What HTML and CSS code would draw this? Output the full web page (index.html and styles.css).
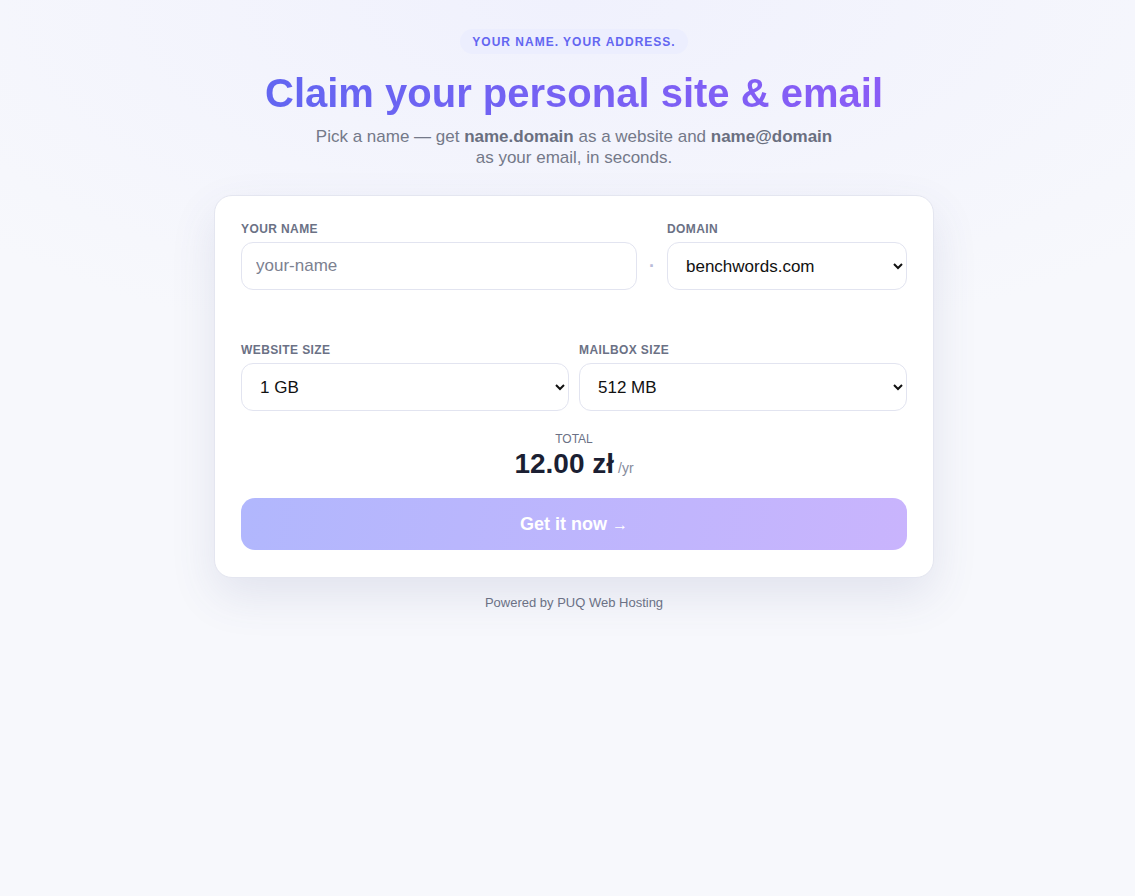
FILE: index.html
```html
<!DOCTYPE html>
<html lang="en">
<head>
<meta charset="utf-8">
<title>Claim your personal site &amp; email</title>
<link rel="stylesheet" href="styles.css">
</head>
<body>
<main class="page">
  <div class="badge">YOUR NAME. YOUR ADDRESS.</div>
  <h1 class="title">Claim your personal site &amp; email</h1>
  <p class="subtitle">Pick a name — get <strong>name.domain</strong> as a website and <strong>name@domain</strong> as your email, in seconds.</p>

  <form class="card">
    <div class="row row-name">
      <div class="field">
        <label class="label" for="name">YOUR NAME</label>
        <input class="control" id="name" type="text" placeholder="your-name">
      </div>
      <span class="dot">·</span>
      <div class="field">
        <label class="label" for="domain">DOMAIN</label>
        <select class="control select" id="domain">
          <option>benchwords.com</option>
        </select>
      </div>
    </div>

    <div class="row row-sizes">
      <div class="field">
        <label class="label" for="web">WEBSITE SIZE</label>
        <select class="control select" id="web">
          <option>1 GB</option>
        </select>
      </div>
      <div class="field">
        <label class="label" for="mail">MAILBOX SIZE</label>
        <select class="control select" id="mail">
          <option>512 MB</option>
        </select>
      </div>
    </div>

    <div class="total">
      <div class="total-label">TOTAL</div>
      <div class="total-price"><span class="amount">12.00 zł</span><span class="per">/yr</span></div>
    </div>

    <button class="cta" type="button">Get it now <span class="arrow">→</span></button>
  </form>

  <p class="footer">Powered by PUQ Web Hosting</p>
</main>
</body>
</html>
```

FILE: styles.css
```css
* { box-sizing: border-box; }

html, body {
  margin: 0;
  min-height: 100%;
}

body {
  font-family: "Liberation Sans", Arial, sans-serif;
  background: #f7f8fc radial-gradient(ellipse 70% 40% at 50% 0%, #f0f1fd 0%, rgba(247, 248, 252, 0) 100%) no-repeat;
  min-height: 896px;
  color: #1e2235;
}

.page {
  display: flex;
  flex-direction: column;
  align-items: center;
  padding: 29px 0 40px 13px;
}

.badge {
  background: #eceefe;
  color: #6366f1;
  font-size: 12px;
  font-weight: 700;
  letter-spacing: 1px;
  line-height: 15px;
  padding: 6px 12px 4px;
  border-radius: 999px;
}

.title {
  margin: 15px 0 0;
  font-size: 40px;
  line-height: 48px;
  font-weight: 700;
  background: linear-gradient(90deg, #6366f1 0%, #8a5cf6 100%);
  -webkit-background-clip: text;
  background-clip: text;
  color: transparent;
}

.subtitle {
  margin: 9px 0 0;
  max-width: 530px;
  text-align: center;
  font-size: 17px;
  line-height: 21px;
  color: #747989;
}

.subtitle strong {
  color: #6a6f80;
  font-weight: 700;
}

.card {
  margin-top: 27px;
  width: 720px;
  background: #ffffff;
  border: 1px solid #e4e6f0;
  border-radius: 18px;
  padding: 26px 26px 27px;
  box-shadow: 0 18px 45px rgba(70, 80, 140, 0.12);
}

.row {
  display: grid;
}

.row-name {
  grid-template-columns: 1fr 6px 240px;
  column-gap: 12px;
  margin-bottom: 53px;
}

.row-sizes {
  grid-template-columns: 1fr 1fr;
  column-gap: 10px;
}

.field {
  display: flex;
  flex-direction: column;
}

.label {
  font-size: 12px;
  line-height: 14px;
  font-weight: 700;
  letter-spacing: 0.4px;
  color: #6b7185;
  margin-bottom: 6px;
}

.control {
  height: 48px;
  border: 1px solid #e2e4f0;
  border-radius: 12px;
  background: #ffffff;
  font-family: "Liberation Sans", Arial, sans-serif;
  font-size: 17px;
  color: #111111;
  padding: 0 14px;
  outline: none;
}

.control::placeholder {
  color: #7c8190;
}

.select {
  padding: 0 10px 0 14px;
}

.dot {
  align-self: end;
  height: 48px;
  line-height: 48px;
  text-align: center;
  font-size: 18px;
  font-weight: 700;
  color: #b9bcd9;
}

.total {
  margin-top: 21px;
  text-align: center;
}

.total-label {
  font-size: 12px;
  line-height: 14px;
  color: #6b7185;
}

.total-price {
  margin-top: 1px;
  line-height: 34px;
}

.amount {
  font-size: 28px;
  font-weight: 700;
  color: #1b1f33;
}

.per {
  margin-left: 4px;
  font-size: 14px;
  color: #868b9c;
}

.cta {
  margin-top: 13px;
  display: block;
  width: 100%;
  height: 52px;
  border: 0;
  border-radius: 14px;
  background: linear-gradient(100deg, #b1b7fd 0%, #c9b4fd 100%);
  color: #ffffff;
  font-family: "Liberation Sans", Arial, sans-serif;
  font-size: 18px;
  font-weight: 700;
  cursor: pointer;
}

.arrow {
  font-weight: 400;
  font-size: 16px;
}

.footer {
  margin: 17px 0 0;
  font-size: 13px;
  color: #6b7185;
}
```
